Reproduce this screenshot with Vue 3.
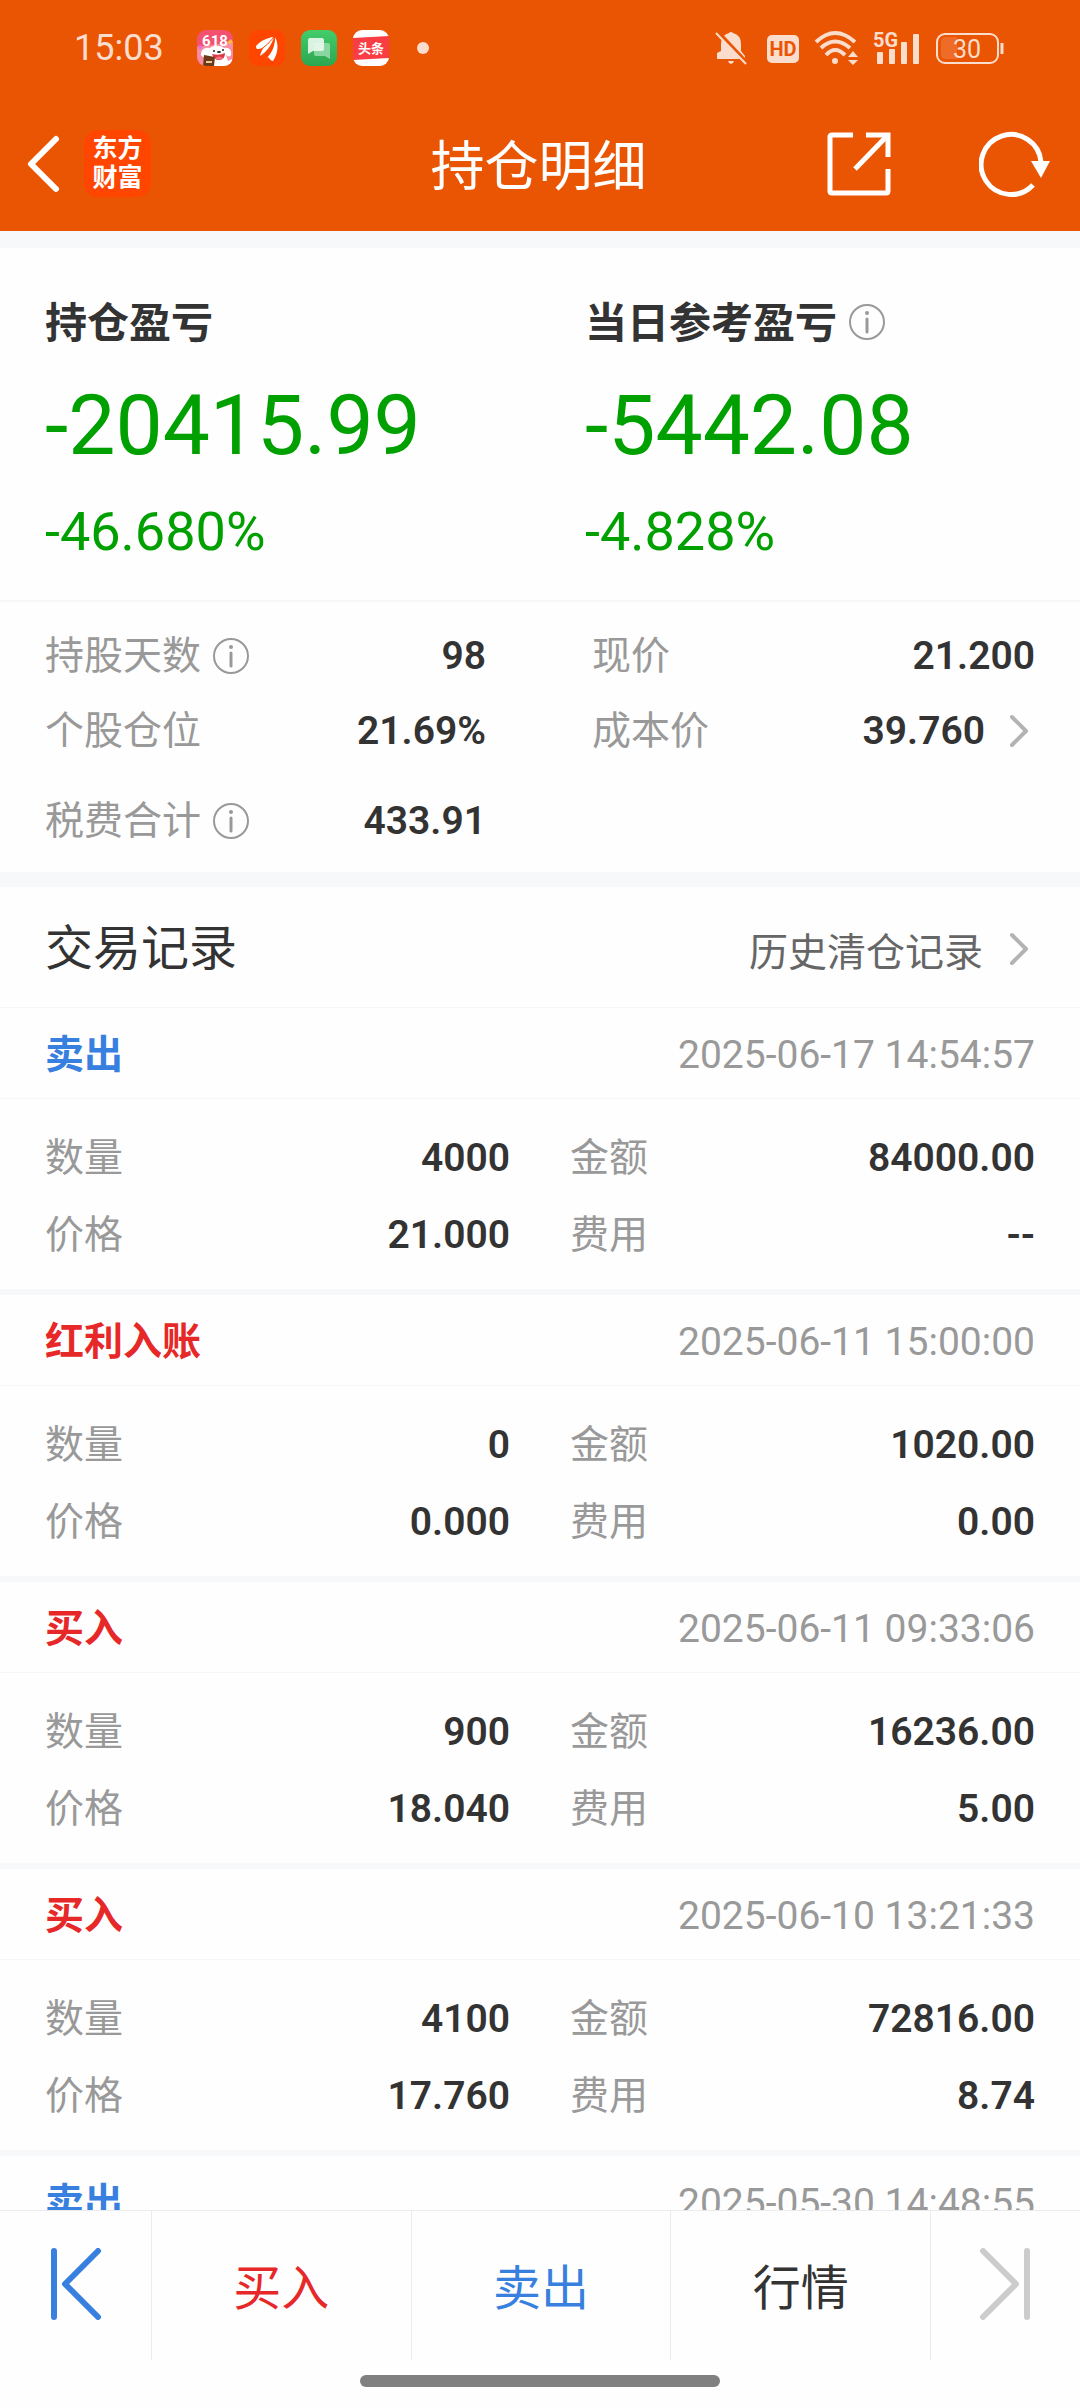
<template>
  <div class="app">
    <!-- Header -->
    <header class="header">
      <div class="status-bar">
        <span class="time">15:03</span>
        <div class="app-icons">
          <svg viewBox="0 0 36 36" class="app-icon">
            <defs>
              <clipPath id="jd-clip"><rect width="36" height="36" rx="9" /></clipPath>
            </defs>
            <g clip-path="url(#jd-clip)">
              <rect width="36" height="36" fill="#f4506f" />
              <path d="M0 17L36 12V36H0z" fill="#f98ba2" />
              <circle cx="3" cy="17" r="2" fill="#e86fd0" />
              <path d="M34 9l1 2 1 1-2 1-1 2-1-2-2-1 2-1z" fill="#ffc53a" />
              <text x="18" y="16" text-anchor="middle" class="jd-text">618</text>
              <path d="M4 25C4 19 8 17 13 18C16 15 24 15 27 18C32 17 35 20 34 25C32 28 30 26 29 24L31 31L35 29V36H8L10 26C7 28 5 27 4 25z" fill="#fff" />
              <circle cx="17" cy="21" r="1" fill="#222" />
              <circle cx="26" cy="20" r="1" fill="#222" />
              <ellipse cx="22" cy="22" rx="2" ry="1" fill="#222" />
              <path d="M15 24Q22 26 28 23Q28 30 22 30Q17 30 15 24z" fill="#d93a48" />
              <path d="M18 28Q22 25 26 28Q22 31 18 28z" fill="#ff6f7d" />
              <path d="M7 25l11 2-1 9H6z" fill="#6d3a17" />
              <path d="M9 32h6" stroke="#e9c9a0" stroke-width="2" />
            </g>
          </svg>
          <svg viewBox="0 0 36 36" class="app-icon">
            <rect width="36" height="36" rx="9" fill="#ff4600" />
            <path d="M7 17C11 12 18 9 24 7C21 11 14 17 8 19z" fill="#fff" />
            <path d="M11 26C12 19 19 12 25 7C23 14 18 22 11 26z" fill="#fff" />
            <path d="M7 16C12 10 19 8 24 7C19 16 15 19 8 19z" fill="#fff" />
            <path d="M17 29C24 22 26 15 26 7C30 14 29 24 24 31C22 31 20 28 19 27z" fill="#fff" />
            <path d="M9 21C15 18 21 12 25 7M15 27C21 21 25 14 26 7" fill="none" stroke="#ff4600" stroke-width="1" />
          </svg>
          <svg viewBox="0 0 36 36" class="app-icon">
            <defs>
              <linearGradient id="msg-bg" x1="0" y1="0" x2="0" y2="1">
                <stop offset="0" stop-color="#42cd6a" />
                <stop offset="1" stop-color="#2ca651" />
              </linearGradient>
            </defs>
            <rect width="36" height="36" rx="9" fill="url(#msg-bg)" />
            <path d="M14 13H27Q29 13 29 15V29L24 26H15Q13 26 13 24V14z" fill="#8ad6a1" />
            <path d="M9 8H21Q23 8 23 10V19Q23 21 21 21H12L7 24V10Q7 8 9 8z" fill="#eafaee" fill-opacity="0.9" />
          </svg>
          <svg viewBox="0 0 36 36" class="app-icon">
            <rect width="36" height="36" rx="9" fill="#fff" />
            <path d="M0 8L36 6V28L0 30z" fill="#fa3c44" />
            <text x="18" y="23" text-anchor="middle" class="toutiao-text">头条</text>
          </svg>
        </div>
        <span class="more-dot"></span>

        <div class="system-icons">
          <svg viewBox="0 0 36 34" width="36" height="34">
            <path d="M14 2Q16 0 18 2Q26 4 26 13V20L30 25V28H2V22L6 20V13Q6 4 14 2z" :fill="tint" />
            <path d="M13 30H19Q18 33 16 33Q14 33 13 30z" :fill="tint" />
            <path d="M3 1L33 33" stroke="#ea5504" stroke-width="4" />
            <path d="M1 2L31 33" :stroke="tint" stroke-width="2" />
          </svg>
          <svg viewBox="0 0 32 34" width="32" height="34">
            <rect y="4" width="32" height="28" rx="5" :fill="tint" />
            <text x="16" y="25" text-anchor="middle" class="hd-text">HD</text>
          </svg>
          <svg viewBox="0 0 45 34" width="45" height="34" class="wifi">
            <g fill="none" :stroke="tint" stroke-width="4">
              <path d="M1 11Q20 -7 40 11" />
              <path d="M6 17Q20 4 35 17" />
              <path d="M11 24Q20 14 30 24" />
            </g>
            <circle cx="20" cy="30" r="3" :fill="tint" />
            <path d="M33 26L38 20L43 26zM33 29H43L38 34z" :fill="tint" />
          </svg>
          <svg viewBox="0 0 47 34" width="47" height="34">
            <text x="0" y="16" class="net-text" :fill="tint">5G</text>
            <g :fill="tint">
              <rect x="4" y="21" width="6" height="12" rx="1" />
              <rect x="16" y="18" width="6" height="15" rx="1" />
              <rect x="28" y="11" width="6" height="22" rx="1" />
              <rect x="40" y="3" width="6" height="30" rx="1" />
            </g>
          </svg>
          <svg viewBox="0 0 68 34" width="68" height="34">
            <rect x="1" y="3" width="61" height="29" rx="8" fill="none" :stroke="tint" stroke-width="2" />
            <path d="M10 6H21V28H10Q5 28 5 23V11Q5 6 10 6z" fill="#ef6c28" />
            <path d="M66 12V23" :stroke="tint" stroke-width="3" />
            <text x="31" y="27" text-anchor="middle" class="battery-text" :fill="tint">30</text>
          </svg>
        </div>
      </div>

      <div class="nav-bar">
        <div class="nav-side">
          <button class="icon-btn" aria-label="返回">
            <svg viewBox="0 0 34 58" width="34" height="58">
              <path d="M30 4L5 29L30 54" fill="none" stroke="#fff" stroke-width="6" stroke-linecap="round" stroke-linejoin="round" />
            </svg>
          </button>
          <div class="brand">东方<br>财富</div>
        </div>
        <h1 class="title">持仓明细</h1>
        <div class="nav-side nav-right">
          <button class="icon-btn" aria-label="分享">
            <svg viewBox="0 0 64 64" width="64" height="64" fill="none" stroke="#fff" stroke-width="5">
              <path d="M26 3H5Q3 3 3 5V59Q3 61 5 61H59Q61 61 61 59V37" />
              <path d="M39 3H61V25" />
              <path d="M61 3L28 37" />
            </svg>
          </button>
          <button class="icon-btn" aria-label="刷新">
            <svg viewBox="0 0 72 66" width="72" height="66">
              <path d="M54 54A30 30 0 1 1 62 31" fill="none" stroke="#fff" stroke-width="5" />
              <path d="M52 30H71L62 47z" fill="#fff" />
            </svg>
          </button>
        </div>
      </div>
    </header>

    <main class="content">
      <!-- Profit summary -->
      <section class="summary">
        <div v-for="item in summary" :key="item.label" class="summary-col">
          <div class="summary-label">
            <span>{{ item.label }}</span>
            <button v-if="item.info" class="icon-btn" aria-label="说明">
              <svg viewBox="0 0 36 36" class="info-icon"><use href="#icon-info" /></svg>
            </button>
          </div>
          <div class="summary-value">{{ item.value }}</div>
          <div class="summary-percent">{{ item.percent }}</div>
        </div>
      </section>

      <!-- Position details -->
      <section class="details">
        <div v-for="(col, i) in details" :key="i" class="details-col">
          <div v-for="row in col" :key="row.label" class="pair">
            <span class="label">{{ row.label }}</span>
            <button v-if="row.info" class="icon-btn info-btn" aria-label="说明">
              <svg viewBox="0 0 36 36" class="info-icon"><use href="#icon-info" /></svg>
            </button>
            <span class="value">{{ row.value }}</span>
            <button v-if="row.more" class="icon-btn chevron-btn" aria-label="查看成本价">
              <svg viewBox="0 0 20 34" class="chevron"><use href="#icon-chevron" /></svg>
            </button>
          </div>
        </div>
      </section>

      <!-- Trade records -->
      <section>
        <div class="records-head">
          <h2>交易记录</h2>
          <a href="#" class="history">
            历史清仓记录
            <svg viewBox="0 0 20 34" class="chevron"><use href="#icon-chevron" /></svg>
          </a>
        </div>
        <article v-for="record in records" :key="record.time" class="record">
          <div class="record-head">
            <span class="record-type" :class="record.color">{{ record.type }}</span>
            <time>{{ record.time }}</time>
          </div>
          <div v-if="record.count" class="record-body">
            <div class="pair"><span class="label">数量</span><span class="value">{{ record.count }}</span></div>
            <div class="pair"><span class="label">金额</span><span class="value">{{ record.amount }}</span></div>
            <div class="pair"><span class="label">价格</span><span class="value">{{ record.price }}</span></div>
            <div class="pair"><span class="label">费用</span><span class="value">{{ record.fee }}</span></div>
          </div>
        </article>
      </section>
    </main>

    <!-- Bottom bar -->
    <footer class="footer">
      <nav class="tabs">
        <button class="tab-step" aria-label="上一只">
          <svg viewBox="0 0 52 72" width="52" height="72" fill="none" stroke="#3880e0" stroke-width="6" stroke-linecap="round" stroke-linejoin="round">
            <path d="M4 3V69M48 3L15 36L48 69" />
          </svg>
        </button>
        <button class="tab-text red">买入</button>
        <button class="tab-text blue">卖出</button>
        <button class="tab-text">行情</button>
        <button class="tab-step" aria-label="下一只" disabled>
          <svg viewBox="0 0 52 72" width="52" height="72" fill="none" stroke="#ccc" stroke-width="6" stroke-linecap="round" stroke-linejoin="round">
            <path d="M48 3V69M4 3L37 36L4 69" />
          </svg>
        </button>
      </nav>
      <div class="home-indicator"></div>
    </footer>

    <!-- Shared icons -->
    <svg class="sprite" width="0" height="0">
      <symbol id="icon-info" viewBox="0 0 36 36">
        <circle cx="18" cy="18" r="17" fill="none" stroke="currentColor" stroke-width="2" />
        <circle cx="18" cy="9" r="2" fill="currentColor" />
        <path d="M18 15V28" stroke="currentColor" stroke-width="3" stroke-linecap="round" />
      </symbol>
      <symbol id="icon-chevron" viewBox="0 0 20 34">
        <path d="M3 3L17 17L3 31" fill="none" stroke="#b3b3b3" stroke-width="4" stroke-linecap="round" stroke-linejoin="round" />
      </symbol>
    </svg>
  </div>
</template>

<script setup>
const tint = '#fbddcd';

const summary = [
  { label: '持仓盈亏', value: '-20415.99', percent: '-46.680%' },
  { label: '当日参考盈亏', value: '-5442.08', percent: '-4.828%', info: true }
];

const details = [
  [
    { label: '持股天数', value: '98', info: true },
    { label: '个股仓位', value: '21.69%' },
    { label: '税费合计', value: '433.91', info: true }
  ],
  [
    { label: '现价', value: '21.200' },
    { label: '成本价', value: '39.760', more: true }
  ]
];

const records = [
  { type: '卖出', color: 'blue', time: '2025-06-17 14:54:57', count: '4000', amount: '84000.00', price: '21.000', fee: '--' },
  { type: '红利入账', color: 'red', time: '2025-06-11 15:00:00', count: '0', amount: '1020.00', price: '0.000', fee: '0.00' },
  { type: '买入', color: 'red', time: '2025-06-11 09:33:06', count: '900', amount: '16236.00', price: '18.040', fee: '5.00' },
  { type: '买入', color: 'red', time: '2025-06-10 13:21:33', count: '4100', amount: '72816.00', price: '17.760', fee: '8.74' },
  { type: '卖出', color: 'blue', time: '2025-05-30 14:48:55' }
];
</script>

<style>
body {
  background: #fefefe;
}
</style>

<style scoped>
.app {
  display: flex;
  flex-direction: column;
  height: 100vh;
  font-family: Roboto, "Noto Sans CJK SC", sans-serif;
  font-size: 39px;
  line-height: 56px;
  color: #333;
  background: #fefefe;
}

button {
  padding: 0;
  border: none;
  background: none;
  font: inherit;
  color: inherit;
}

svg {
  display: block;
}

h1,
h2 {
  margin: 0;
  font-weight: 400;
}

.icon-btn {
  display: flex;
  align-items: center;
}

.red {
  color: #e62828;
}

.blue {
  color: #3880e0;
}

/* Header */
.header {
  flex: none;
  background: #ea5504;
  color: #fff;
}

.status-bar {
  display: flex;
  align-items: center;
  height: 96px;
  padding: 0 76px 0 74px;
}

.time {
  font-size: 36px;
  color: #fbddcd;
}

.app-icons {
  display: flex;
  gap: 16px;
  margin-left: 33px;
}

.app-icon {
  width: 36px;
  height: 36px;
}

.jd-text {
  font-size: 15px;
  font-weight: 700;
  line-height: 16px;
  fill: #fff;
}

.toutiao-text {
  font-size: 13px;
  font-weight: 700;
  line-height: 16px;
  fill: #fff;
}

.more-dot {
  width: 12px;
  height: 12px;
  margin-left: 28px;
  border-radius: 50%;
  background: #fbddcd;
}

.system-icons {
  display: flex;
  gap: 16px;
  margin-left: auto;
}

.system-icons svg {
  overflow: visible;
}

.wifi {
  margin-right: -3px;
}

.hd-text {
  font-size: 20px;
  font-weight: 700;
  fill: #ea5504;
}

.net-text {
  font-size: 20px;
  font-weight: 700;
}

.battery-text {
  font-size: 25px;
}

.nav-bar {
  display: flex;
  align-items: center;
  height: 135px;
  padding: 0 29px 0 26px;
}

.nav-side {
  display: flex;
  flex: 1;
  align-items: center;
  gap: 24px;
}

.nav-right {
  justify-content: flex-end;
  gap: 88px;
}

.brand {
  box-sizing: border-box;
  width: 67px;
  height: 67px;
  padding-top: 4px;
  border-radius: 14px;
  background: #ff4600;
  font-size: 25px;
  font-weight: 700;
  line-height: 29px;
  text-align: center;
}

.title {
  padding-top: 8px;
  font-size: 54px;
  line-height: 80px;
}

/* Content */
.content {
  flex: 1;
  min-height: 0;
  overflow-y: auto;
  scrollbar-width: none;
  border-top: 17px solid #f6f8fa;
}

.summary {
  display: grid;
  grid-template-columns: 1fr 1fr;
  padding: 46px 0 32px;
  border-bottom: 2px solid #f7f7f7;
}

.summary-col {
  padding-left: 45px;
}

.summary-label {
  display: flex;
  align-items: center;
  gap: 12px;
  height: 56px;
  font-size: 42px;
  font-weight: 700;
}

.summary-label span {
  padding-top: 4px;
}

.summary-value {
  margin-top: 22px;
  font-size: 84px;
  line-height: 108px;
  color: #00a000;
}

.summary-percent {
  margin-top: 16px;
  font-size: 54px;
  line-height: 72px;
  color: #00a000;
}

.info-icon {
  width: 36px;
  height: 36px;
  color: #999;
}

.chevron {
  width: 20px;
  height: 34px;
}

.pair {
  display: flex;
  align-items: center;
}

.label {
  color: #999;
}

.value {
  margin-left: auto;
  font-weight: 600;
}

.info-btn {
  margin-left: 12px;
}

.chevron-btn {
  margin: 0 6px 0 24px;
}

.details {
  display: grid;
  grid-template-columns: 441px 1fr;
  column-gap: 106px;
  padding: 16px 45px 14px;
  border-bottom: 15px solid #f6f8fa;
}

.details .pair {
  height: 75px;
}

.details .pair:nth-child(3) {
  margin-top: 15px;
}

/* Records */
.records-head {
  display: flex;
  align-items: center;
  justify-content: space-between;
  height: 121px;
  padding: 4px 51px 0 45px;
  box-sizing: border-box;
  border-bottom: 1px solid #f7f7f7;
}

.records-head h2 {
  font-size: 48px;
}

.history {
  display: flex;
  align-items: center;
  gap: 26px;
  line-height: normal;
  color: #666;
  text-decoration: none;
}

.record {
  border-bottom: 6px solid #f6f8fa;
}

.record-head {
  box-sizing: border-box;
  display: flex;
  align-items: center;
  justify-content: space-between;
  height: 91px;
  padding: 4px 45px 0;
  border-bottom: 1px solid #f7f7f7;
}

.record-type {
  font-weight: 700;
}

.record-head time {
  color: #999;
}

.record-body {
  display: grid;
  grid-template-columns: 465px 1fr;
  column-gap: 60px;
  padding: 20px 45px 16px;
}

.record-body .pair {
  height: 77px;
}

/* Footer */
.footer {
  flex: none;
  border-top: 1px solid #ebebeb;
}

.tabs {
  display: grid;
  grid-template-columns: 151px 1fr 1fr 1fr 150px;
  height: 149px;
}

.tabs button {
  display: flex;
  align-items: center;
  justify-content: center;
  font-size: 48px;
}

.tabs button + button {
  border-left: 1px solid #ebebeb;
}

.tabs .tab-text {
  padding-top: 6px;
}

.tabs .tab-step {
  padding-bottom: 4px;
}

.home-indicator {
  width: 33.33%;
  height: 12px;
  margin: 15px auto 21px;
  border-radius: 6px;
  background: #808080;
}

.sprite {
  position: absolute;
}
</style>
